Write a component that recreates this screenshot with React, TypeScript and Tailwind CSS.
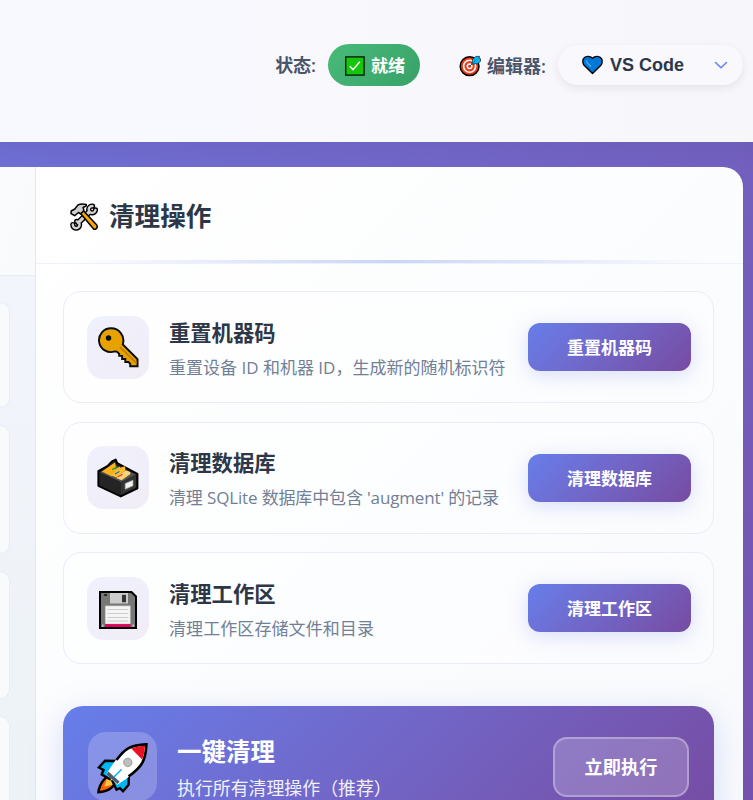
import React from "react";

const sans = "font-['Open_Sans','Noto_Sans_CJK_SC',sans-serif]";

function Check() {
  return (
    <svg className="block h-5 w-5 shrink-0" viewBox="0 0 20 20">
      <rect x="0.7" y="0.9" width="18.4" height="18.2" fill="#16c60c" stroke="#0b1f12" strokeWidth="1.4" />
      <path d="M4.8 10.2 8 13.6 14.8 5.8" fill="none" stroke="#fff" strokeWidth="1.4" />
    </svg>
  );
}

function Target() {
  return (
    <svg className="block h-[22px] w-[22px] shrink-0" viewBox="0 0 22 22">
      <circle cx="10.6" cy="11.2" r="9.4" fill="#f03a17" stroke="#000" strokeWidth="1.5" />
      <circle cx="10.6" cy="11.3" r="6" fill="#f03a17" stroke="#fff" strokeWidth="1.6" />
      <circle cx="10.6" cy="11.3" r="2.3" fill="#f03a17" stroke="#fff" strokeWidth="1.5" />
      <path d="m10.6 11.4 4-4" stroke="#0063b1" strokeWidth="1" />
      <path d="m13 9 .4-4.2L16.8 1.4h3.7l-.5 1.8 1.6.6v2.4l-3 2.6Z" fill="#00bcf2" stroke="#111" strokeWidth=".7" />
      <path d="m13.4 8.7 5-4.8" stroke="#0063b1" strokeWidth=".7" />
    </svg>
  );
}

function Heart() {
  return (
    <svg className="block h-5 w-[21px] shrink-0" viewBox="0 0 21 20">
      <path d="M10.5 18.6 2.1 10.3C.6 8.8.5 5.2 1.5 3.7 3.3.9 8 .6 10.5 3.2 13 .6 17.7.9 19.5 3.7c1 1.5.9 5.1-.6 6.6Z" fill="#0078d7" stroke="#000" strokeWidth="1.4" strokeLinejoin="round" />
      <path d="M4.6 5.2c0 3.1 2.2 4.6 4.6 6.4" fill="none" stroke="#4ca5e8" strokeWidth="1.5" />
    </svg>
  );
}

function Tools() {
  return (
    <svg className="block h-7 w-7 shrink-0" viewBox="0 0 28 28" fill="none">
      <g stroke="#000" strokeWidth="5.2" strokeLinecap="round">
        <path d="M22.6 3.1a3.4 3.4 0 1 0 2.9 3.8" />
        <path d="M2.8 21.5a3.4 3.4 0 1 0 3.8-3.1M5.2 24.6l.1.2" />
        <path d="M19.2 9 8.4 19.6" strokeWidth="6" />
      </g>
      <g stroke="#d2d2d2" strokeWidth="2.4" strokeLinecap="round">
        <path d="M22.6 3.1a3.4 3.4 0 1 0 2.9 3.8" />
        <path d="M2.8 21.5a3.4 3.4 0 1 0 3.8-3.1" />
        <path d="M19.2 9 8.4 19.6" strokeWidth="3.2" />
      </g>
      <path d="m10.6 10.4 2.8-2.6L26.8 22c.5 1 .4 2.8-.5 3.6-1 .8-2.3.7-3.1 0Z" fill="#f7a500" stroke="#000" strokeWidth="1.5" strokeLinejoin="round" />
      <path d="M1 10.6 1.2 8l3.6-2L8 1.9c2.5-1.3 5.4-1.2 8.3-.5v1.5l-3.2 1.6.8 3.1-3.3 3.2-2.1-1.3-3.8 3.2Z" fill="#cfcfcf" stroke="#000" strokeWidth="1.5" strokeLinejoin="round" />
    </svg>
  );
}

function Key() {
  return (
    <svg className="mt-px block h-[41px] w-[41px]" viewBox="0 0 42 42">
      <path d="M13.5 1.3A12.2 12.2 0 1 0 17.3 25l2 .2 2.4 2.3v2.1h3v3.2h3.3v3.1h3.2l1.8 1.8v2.5h7.5V33L25.4 17.9c1.2-4.2.8-8.4-2.2-12a12.3 12.3 0 0 0-9.7-4.6Z" fill="#e8a200" stroke="#0b0e12" strokeWidth="2" />
      <circle cx="10.8" cy="11.3" r="2.8" fill="#0b0e12" />
      <path d="m22.5 20.6 16.8 16.5" stroke="#c17c00" strokeWidth="1.8" />
    </svg>
  );
}

function FileBox() {
  return (
    <svg className="mt-0.5 block h-[42px] w-[42px]" viewBox="0 0 42 42">
      <path d="m1.4 13.2 9.4-5.4L15 3.4l3.7-1.8 1.5 3.6 20.2 10.6v14.5L23.8 38.4 1.4 27.8Z" fill="#272727" stroke="#000" strokeWidth="2" strokeLinejoin="round" />
      <path d="m3 14.2 15-6.8 21 9.2-14.9 7.3Z" fill="#535353" />
      <path d="m4.8 13.4 13.1-9 1 3.6-1.2 3.2 5.3-2.6v4.6l-8.3 5Z" fill="#ffb01a" />
      <path d="m14.5 17.6 2.4-3 6.6-5 4.6-1.4.3 4-9.2 7.2Z" fill="#ffbd2e" />
      <path d="m19.5 20 2.4-3 7-4.8 4.3 1.8.2 2-8.8 6.2Z" fill="#ffd278" />
      <path d="m15.2 11.6 4.7-2.2" stroke="#16a832" strokeWidth="1.3" />
      <path d="m18 16 4.5-2.5" stroke="#0078d7" strokeWidth="1.3" />
      <path d="m21 18.8 4.4-2.4" stroke="#e84416" strokeWidth="1.3" />
      <path d="m2.8 15 21.1 9.6v12L2.8 26.8Z" fill="#242424" />
      <path d="m24 24.6 15-7.3v12.2l-15 7.1Z" fill="#343434" />
      <path d="m28.2 25.6 7.8-3.4v5.6l-7.8 3.4Z" fill="#f2f2f2" stroke="#aaa" strokeWidth=".7" />
    </svg>
  );
}

function Disk() {
  return (
    <svg className="mt-[3px] block h-10 w-10" viewBox="0 0 40 40">
      <path d="M2 2h31.5l4.5 4.5V38H2Z" fill="#777" stroke="#000" strokeWidth="2" />
      <path d="M12 3h18v10.5H12Z" fill="#ccc" />
      <path d="M24 4.8h4v7.5h-4Z" fill="#333" />
      <path d="M6.2 4h2.7v2H6.2Z" fill="#222" />
      <path d="M7.2 15.8h25.2V34H7.2Z" fill="#f5f5f5" stroke="#aaa" strokeWidth=".5" />
      <path d="M9.5 19.5h20.8M9.5 23.5h20.8M9.5 27.5h20.8M9.5 31h20.8" stroke="#ccc" />
      <path d="M7 34.2h25.5V37H7Z" fill="#e3005c" />
      <path d="M4 34.5h1.5V37H4Zm30.5 0H36V37h-1.5Z" fill="#bbb" />
    </svg>
  );
}

function Rocket() {
  return (
    <svg className="block h-[51px] w-[51px]" viewBox="0 0 51 51">
      <path d="m10 33.5-3.1 3.2C3.2 41 1.9 44.5 1.4 49.2c5-.2 9.2-1.3 13-4.4l3.8-3.9Z" fill="#f7630c" stroke="#000" strokeWidth="2.4" />
      <path d="m9.8 36.4-2.6 7 7.4-1.5 3.4-3-5-5Z" fill="#ffc83d" />
      <path d="m20 18-12-.2-6.1 6.7 4.6 2.5-1.8 4.5 8 4.6Zm11.8 13-.2 10.7-5.6 6.5-3.1-3-3.4 1.5-4-8.5Z" fill="#00b7f1" stroke="#000" strokeWidth="2.4" />
      <path d="M9.2 31.2C16.2 20 23 10 31.2 5.3 36 2.7 42 1.7 49.4 1.4c-.3 7.4-1.4 13.4-4 18.2C41 27.8 31.3 34.7 20.4 41.8Z" fill="#fff" />
      <path d="M19.5 17C23 12.2 27 7.7 31.2 5.3 36 2.7 42 1.7 49.4 1.4c-.3 7.4-1.4 13.4-4 18.2-2.7 5-7.6 9.4-13.8 13.8" fill="none" stroke="#000" strokeWidth="2.6" />
      <path d="M34.2 5.5c4.4-1.8 8.9-2.5 13.8-2.8-.3 5-1.2 9.8-2.9 13.7Z" fill="#e81224" />
      <path d="m9.4 31.6 2-3.2 11.3 10.4-2.4 2.2Z" fill="#505968" />
      <circle cx="30.8" cy="19.4" r="4.2" fill="#bebebe" stroke="#999" />
      <path d="m16.6 34.2 8.1-7.9" stroke="#00b7f1" strokeWidth="1.5" />
    </svg>
  );
}

const actions = [
  { title: "重置机器码", text: "重置设备 ID 和机器 ID，生成新的随机标识符", icon: <Key />, tracking: "tracking-normal" },
  { title: "清理数据库", text: "清理 SQLite 数据库中包含 'augment' 的记录", icon: <FileBox />, tracking: "tracking-[-0.15px]" },
  { title: "清理工作区", text: "清理工作区存储文件和目录", icon: <Disk />, tracking: "tracking-[0.08px]" },
];

interface ActionProps {
  title: string;
  text: string;
  icon: React.ReactNode;
  tracking: string;
}

function ActionCard({ title, text, icon, tracking }: ActionProps) {
  return (
    <article className="flex h-28 shrink-0 items-center rounded-[18px] border border-[#ebebfb] bg-white/35 pr-[22px] pl-[23px]">
      <div className="flex h-[63px] w-[62px] shrink-0 items-center justify-center rounded-2xl bg-linear-135 from-[#eff1fd] to-[#f1edf6]">{icon}</div>
      <div className="ml-5 flex-1 pt-[5px] whitespace-nowrap">
        <h3 className="text-[21.3px] leading-[28px] font-bold text-[#2d3748]">{title}</h3>
        <p className={`mt-[7px] text-[17px] leading-[27px] text-[#718096] ${tracking}`}>{text}</p>
      </div>
      <button className="h-12 w-[163px] shrink-0 rounded-xl bg-linear-135 from-[#667eea] to-[#764ba2] pt-0.5 text-[17px] leading-6 font-bold text-white shadow-[0_4px_20px_rgba(102,126,234,0.25)]">{title}</button>
    </article>
  );
}

export default function App() {
  return (
    <div className={`flex h-[800px] w-[753px] flex-col overflow-hidden bg-linear-to-br from-[#667eea] from-[-40%] to-[#764ba2] to-[125%] ${sans}`}>
      <header className="flex h-[142px] shrink-0 items-start justify-end bg-linear-to-r from-[#f8f9fe] to-[#f7f6fb] pt-11 pr-2.5 text-lg font-semibold text-[#4a5568]">
        <span className="mr-3 leading-[43px]">状态:</span>
        <div className="mr-[39px] flex h-[42px] w-[92px] items-center gap-[6px] rounded-full bg-linear-135 from-[#48bb78] to-[#38a169] pt-px pl-[17px] text-[17px] font-bold text-white">
          <Check />
          <span className="pt-px">就绪</span>
        </div>
        <div className="mr-3 flex h-[43px] items-center gap-[6px]">
          <Target />
          <span>编辑器:</span>
        </div>
        <button className="mt-px flex h-10 w-[185px] items-center rounded-full bg-[#f8f8fd] pr-[15px] pl-6 font-['Liberation_Sans',sans-serif] text-[18px] font-bold text-[#2d3748] shadow-[0_3px_10px_rgba(0,0,0,0.08)]">
          <Heart />
          <span className="ml-[7px] pb-px">VS Code</span>
          <svg className="ml-auto h-3.5 w-3.5" viewBox="0 0 14 14" fill="none" stroke="#667eea" strokeWidth="1.5" strokeLinecap="round" strokeLinejoin="round">
            <path d="m1.5 4.5 5.5 5.2 5.5-5.2" />
          </svg>
        </button>
      </header>
      <div className="h-[25px] shrink-0 bg-linear-to-b from-[#5c4ba0]/15 to-transparent" />
      <main className="mr-2.5 flex min-h-0 flex-1 overflow-hidden rounded-tr-[20px]">
        <aside className="w-9 shrink-0 border-r border-[#e0e6f8] bg-linear-to-b from-[#f3f6fc] to-[#edf2f7]">
          <div className="h-[109px] border-b border-[#e8ecf6] bg-linear-to-br from-[#fafbfc] to-[#f8fafc]" />
          <div className="flex flex-col gap-[17px] pt-[26px] pr-[25px]">
            <div className="h-[106px] rounded-r-2xl border border-l-0 border-[#e8ecf9] bg-[#f8fafc]" />
            <div className="h-[129px] rounded-r-2xl border border-l-0 border-[#e8ecf9] bg-[#f8fafc]" />
            <div className="h-[128px] rounded-r-2xl border border-l-0 border-[#e8ecf9] bg-[#f8fafc]" />
            <div className="h-[129px] shrink-0 rounded-r-2xl border border-l-0 border-[#e8ecf9] bg-[#f8fafc]" />
          </div>
        </aside>
        <section className="flex min-w-0 flex-1 flex-col bg-linear-135 from-white to-[#f8fafc]">
          <div className="flex h-[97px] shrink-0 flex-col border-b border-[#eef0fb]">
            <div className="flex flex-1 items-center pt-[6px] pl-[34px]">
              <Tools />
              <h2 className="ml-[11px] text-[25.6px] leading-9 font-bold text-[#2d3748]">清理操作</h2>
            </div>
            <div className="mx-[35px] h-[3px] bg-linear-to-r from-transparent via-[#c9d5f8] to-transparent" />
          </div>
          <div className="flex min-h-0 flex-1 flex-col gap-[18.5px] pt-[27px] pr-[29px] pl-[27px]">
            {actions.map((item) => <ActionCard key={item.title} {...item} />)}
            <article className="mt-[23.5px] flex h-[122px] shrink-0 items-center rounded-[20px] bg-linear-135 from-[#667eea] to-[#764ba2] pr-[25px] pl-[25px] text-white shadow-[0_8px_32px_rgba(102,126,234,0.25)]">
              <div className="mt-[-1px] flex h-[69px] w-[69px] shrink-0 items-center justify-center rounded-[18px] bg-white/20 pt-1">
                <Rocket />
              </div>
              <div className="ml-5 flex-1 pt-[3px] whitespace-nowrap">
                <h3 className="text-[24.5px] leading-[34px] font-bold">一键清理</h3>
                <p className="mt-[5px] text-[17.9px] leading-[28px] text-white/90">执行所有清理操作（推荐）</p>
              </div>
              <button className="h-[60px] w-[136px] shrink-0 rounded-[14px] border-2 border-white/30 bg-white/20 pt-0.5 text-[18.2px] font-bold">立即执行</button>
            </article>
          </div>
        </section>
      </main>
    </div>
  );
}
